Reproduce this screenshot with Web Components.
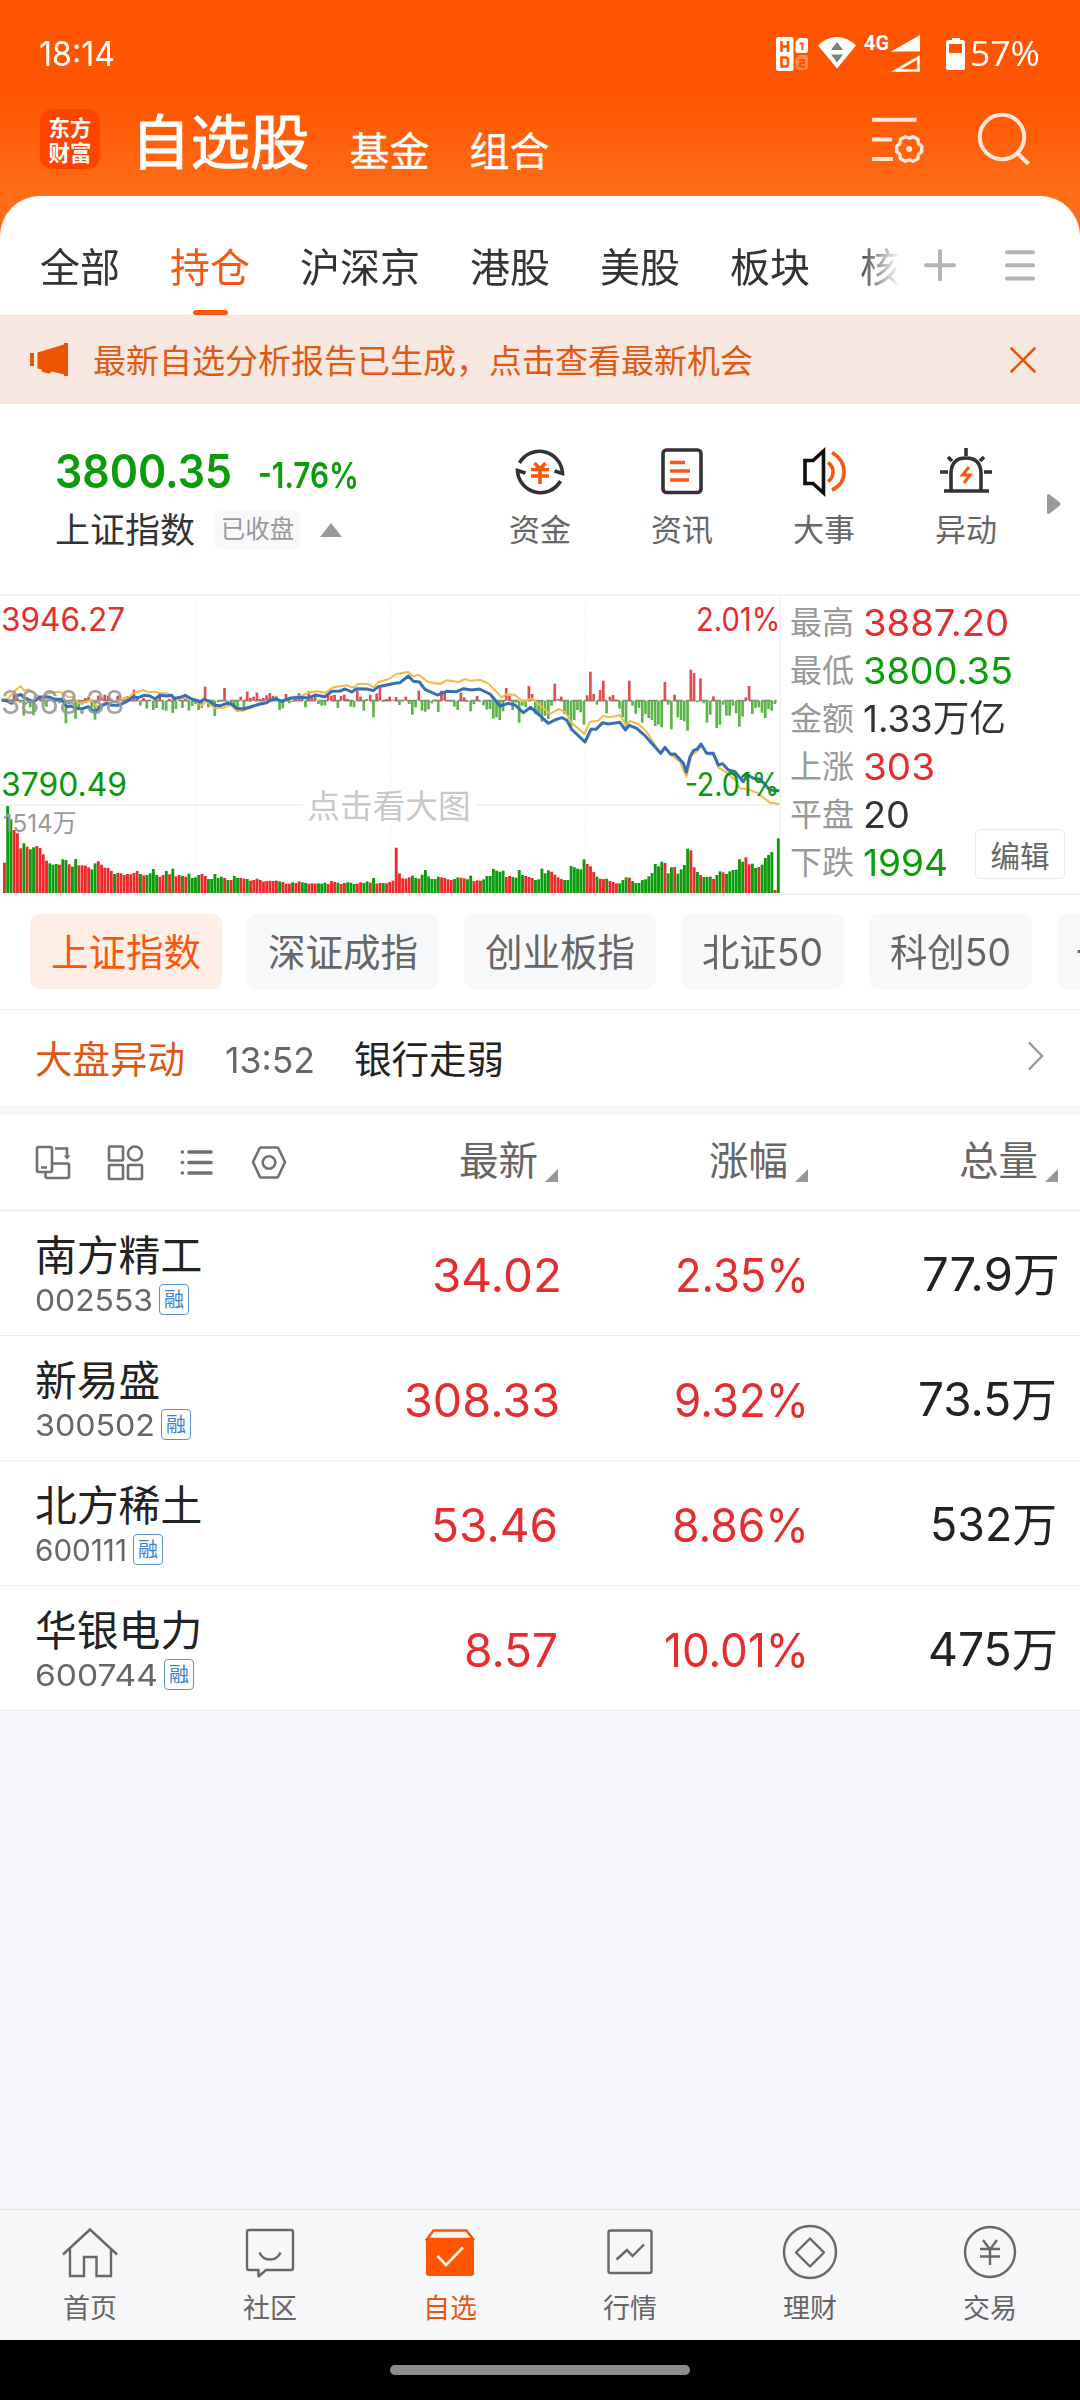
<!DOCTYPE html>
<html lang="zh-CN">
<head>
<meta charset="utf-8">
<title>自选股</title>
<style>
  body {
    margin: 0;
    background: #f6f7fa;
    font-family: Inter, "Noto Sans CJK SC", sans-serif;
    color: #333;
  }
</style>
</head>
<body>

<app-></app->

<script>
'use strict'

const define = (name, css, html, after) =>
  customElements.define(name,
    class extends HTMLElement {
      constructor() {
        super()
        const t = document.createElement('template')
        t.innerHTML = `<style>${css}</style>${html}`
        this
          .attachShadow({mode: 'open'})
          .appendChild(t.content.cloneNode(true))
      }
      connectedCallback() {
        if (after) after(this, this.shadowRoot)
      }
    }
  )


// ---------- fit- : one line of text stretched to the width in "w" ----------

define('fit-', `
  :host { display: inline-block; white-space: nowrap; flex: none; }
  span { display: inline-block; transform-origin: 0 50%; }
`, `<span><slot></slot></span>`, (host, root) => {
  const span = root.querySelector('span')
  const w = +host.getAttribute('w')
  span.style.transform = 'none'
  const real = span.getBoundingClientRect().width
  host.style.width = w + 'px'
  span.style.transform = `scaleX(${w / real})`
})


// ---------- status bar ----------

define('status-bar', `
  :host {
    display: flex; align-items: center; box-sizing: border-box;
    height: 88px; padding: 20px 40px 0 39px;
    color: #fff; font-size: 34px; line-height: 40px;
  }
  svg { margin-left: auto; }
  .pct { font-family: "Open Sans", sans-serif; margin: 0 0 2px 2px; }
  .g { font: 700 20px Roboto, sans-serif; }
`, `
  <fit- w="76">18:14</fit->
  <svg width="194" height="44" viewBox="774 32 194 44" fill="#fff">
    <rect x="776" y="37" width="17.500" height="34" rx="2.500"/>
    <g fill="none" stroke="#ff5500" stroke-width="2.600">
      <path d="M781.500 41v11M788 41v11M781.500 46.500h6.500"/>
      <path d="M781.500 57.500h4q2.500 0 2.500 2.500v4q0 2.500-2.500 2.500h-4z"/>
    </g>
    <path d="M799 38h6.500q2.500 0 2.500 2.500v10q0 2.500-2.500 2.500h-8q-2 0-2-2.500V42z"/>
    <path d="M799.500 43.500h3V50" fill="none" stroke="#ff5500" stroke-width="2"/>
    <path opacity=".3" d="M799 55h6.500q2.500 0 2.500 2.500v10q0 2.500-2.500 2.500h-8q-2 0-2-2.500V59z"/>
    <path d="M799 60h5v3h-4v3.500h5" fill="none" stroke="#ff5500" stroke-width="2"/>
    <path d="M818 45.500q8.500-8.500 19-8.500t19 8.500L837 68.500z"/>
    <path d="M837 42l6 8h-12zM837 62.500l6-8h-12z" fill="#7f7f7f"/>
    <text class="g" x="864" y="50" textLength="25" lengthAdjust="spacingAndGlyphs">4G</text>
    <path d="M920 35v16.500h-29z"/>
    <path d="M918.500 57.500v13H896z" fill="none" stroke="#fff" stroke-width="2.600"/>
    <path d="M952 38h8v3h-8z"/>
    <rect x="946" y="40" width="19" height="30" rx="2.500"/>
    <path d="M949 44h13v9h-13z" fill="#ff5500"/>
  </svg>
  <fit- class="pct" w="70">57%</fit->
`)


// ---------- title row ----------

define('title-bar', `
  :host {
    display: flex; align-items: flex-start; box-sizing: border-box;
    height: 108px; padding: 0 48px 0 40px; color: #fff;
  }
  .logo {
    width: 60px; height: 60px; margin-top: 21px; padding-top: 5px; box-sizing: border-box;
    border-radius: 13px; background: #ff4400; text-align: center;
    font: 700 21.500px/25px "Noto Sans CJK SC", sans-serif;
  }
  h1 { margin: 24px 40px 0 31px; font-size: 59.500px; line-height: 60px; font-weight: 400; -webkit-text-stroke: .9px #fff; }
  a { margin: 44px 39px 0 0; font-size: 40px; line-height: 40px; -webkit-text-stroke: .3px #fff; }
  a + a { margin-left: 1px; }
  svg { margin-top: 20px; fill: none; stroke: #ffe6d8; stroke-width: 4; }
  .set { margin-left: auto; margin-right: 46px; }
`, `
  <div class="logo">东方<br>财富</div>
  <h1>自选股</h1>
  <a>基金</a>
  <a>组合</a>
  <svg class="set" width="58" height="62" viewBox="870 108 58 62">
    <path d="M872 119.700h44.500M872 139.500h20M872 159h21"/>
    <g transform="translate(909.200 149)" stroke-width="3.400" stroke-linejoin="round">
      <path d="M12.500-2.700V2.700L9.300 5.400 8.700 9.700 4 12.200 0 10.800-4 12.200-8.700 9.700-9.300 5.400-12.500 2.700V-2.700L-9.300-5.400-8.700-9.700-4-12.200 0-10.800 4-12.200 8.700-9.700 9.300-5.400z"/>
      <circle r="3" fill="#ffe6d8" stroke="none"/>
    </g>
  </svg>
  <svg width="58" height="62" viewBox="974 108 58 62">
    <circle cx="1002" cy="137" r="22.200"/>
    <path d="M1017.500 153l11 11"/>
  </svg>
`)


// ---------- group tabs ----------

define('group-tabs', `
  :host {
    display: flex; box-sizing: border-box; height: 120px; padding: 0 43px 0 40px;
    border-radius: 40px 40px 0 0; border-bottom: 1px solid #e2e2e6; background: #fff;
  }
  nav {
    display: flex; gap: 50px; width: 860px; overflow: hidden; white-space: nowrap;
    -webkit-mask: linear-gradient(90deg, #000 815px, transparent 860px);
    mask: linear-gradient(90deg, #000 815px, transparent 860px);
  }
  a {
    display: flex; flex-direction: column; align-items: center; justify-content: space-between;
    flex: none; font-size: 40px; line-height: 40px; padding-top: 52px;
  }
  a.on { color: #f9560e; }
  a.on::after { content: ""; width: 35px; height: 5px; border-radius: 3px; background: #f9560e; }
  svg { margin: 47px 0 0 auto; flex: none; fill: none; stroke: #b3b3b3; stroke-width: 4; stroke-linecap: round; }
`, `
  <nav><a>全部</a><a class="on">持仓</a><a>沪深京</a><a>港股</a><a>美股</a><a>板块</a><a>核心</a></nav>
  <svg width="116" height="44" viewBox="921 243 116 44">
    <path d="M926 265.300h28M940 251v28.500M1007 252.300h26M1007 265.300h26M1007 278.500h26"/>
  </svg>
`)


// ---------- notice ----------

define('notice-bar', `
  :host {
    display: flex; align-items: center; box-sizing: border-box; height: 88px;
    padding: 0 43px 0 28px; background: #f6e7e0; color: #df5a12; font-size: 33px; line-height: 40px;
  }
  fit- { margin: 2px 0 0 23px; }
  .x { margin-left: auto; }
`, `
  <svg width="42" height="36" viewBox="28 342 42 36" fill="#ea5504">
    <path d="M30 353h4v13h-4zM37.500 352.500L64 344.500V343h4v33h-4v-1.500l-12-3-2.500 2-7-1.500-1-2.500-4-1z"/>
  </svg>
  <fit- w="660">最新自选分析报告已生成，点击查看最新机会</fit->
  <svg class="x" width="28" height="28" viewBox="-14 -14 28 28" fill="none" stroke="#e2590e" stroke-width="2.600" stroke-linecap="round">
    <path d="M-11.500-11.500L11.500 11.500M11.500-11.500L-11.500 11.500"/>
  </svg>
`)


// ---------- index summary and shortcuts ----------

define('short-cut', `
  :host {
    display: flex; flex-direction: column; align-items: center; width: 142px;
    font-size: 31px; line-height: 36px; color: #666; gap: 13px;
  }
`, `<slot name="icon"></slot><span><slot></slot></span>`)

define('index-head', `
  :host { display: flex; box-sizing: border-box; height: 190px; padding: 0 0 0 55px; background: #fff; }
  .quote { width: 414px; padding-top: 42px; }
  .row { display: flex; align-items: center; }
  .price { color: #0b9b0b; align-items: baseline; font-weight: 600; font-size: 46px; line-height: 50px; }
  .price fit-:last-child { font-size: 36px; margin-left: 26px; }
  .name { margin-top: 10px; font-size: 35px; line-height: 40px; }
  .tag {
    margin: 0 20px; width: 85px; height: 38px; border-radius: 5px; background: #f7f8fa;
    font-size: 24.500px; line-height: 37px; text-align: center; color: #999;
  }
  .up { border: 11px solid transparent; border-top: 0; border-bottom: 14px solid #999; }
  .cuts { display: flex; padding-top: 41px; }
  .more { margin: 90px 0 0 10px; align-self: flex-start; }
  svg { fill: none; stroke: #333; stroke-width: 3.600; }
  .o { stroke: #f9560e; }
`, `
  <div class="quote">
    <div class="row price"><fit- w="177">3800.35</fit-><fit- w="101">-1.76%</fit-></div>
    <div class="row name">上证指数<span class="tag">已收盘</span><i class="up"></i></div>
  </div>
  <div class="cuts">
    <short-cut>
      <svg slot="icon" width="54" height="54" viewBox="-27 -27 54 54">
        <path d="M-20.500-9A23 23 0 0 1 22.500 1.500l-8-2.500M20.500 9A23 23 0 0 1-22.500-1.500l8 2.500"/>
        <path class="o" d="M-5.500-9L0-3l5.500-6M0-3V12M-9-2.500H9M-9 4H9"/>
      </svg>资金
    </short-cut>
    <short-cut>
      <svg slot="icon" width="54" height="54" viewBox="-27 -27 54 54">
        <rect x="-19" y="-22" width="38" height="42.500" rx="3.500"/>
        <path class="o" d="M-12-9.500H3M-12-1H8M-12 8H7"/>
      </svg>资讯
    </short-cut>
    <short-cut>
      <svg slot="icon" width="54" height="54" viewBox="-27 -27 54 54">
        <path stroke="#111" d="M-19-11.500h8L-.500-21V21L-11 11.500h-8z"/>
        <path class="o" d="M4-9.500q5 3.500 5 9.500t-5 9.500M8-19.500q12 7 12 19.500T8 18"/>
      </svg>大事
    </short-cut>
    <short-cut>
      <svg slot="icon" width="54" height="54" viewBox="-27 -27 54 54">
        <path d="M-15 18V2Q-15-14 0-14T15 2V18M-22 19H23M0-24v8M-18-15l4 4M18-15l-4 4M-26 0h8M26 0h-8"/>
        <path class="o" stroke-width="3" d="M3-5L-3.500 3H4L-2 11"/>
      </svg>异动
    </short-cut>
  </div>
  <svg class="more" width="14" height="20" viewBox="0 0 14 20">
    <path d="M0 1.500Q0 0 2 0L13 8.500Q14 10 13 11.500L2 20Q0 20 0 18.500z" fill="#999" stroke="none"/>
  </svg>
`)


// ---------- intraday chart ----------
// units are a third of a pixel, one bar a minute, 240 bars

const volume = `
r91 g261 g221 r189 r179 r134 g149 r139 g131 g137 r141 r135 r116 r97 g89 g85 g87 r85 g101 g99
r86 g79 g102 r83 r83 r82 r77 g71 g89 r95 r85 r76 r75 r66 g57 r60 r59 r54 r57 r56
r60 r66 g57 r53 g54 g59 g72 g54 r49 r54 g66 r56 g73 r50 r54 g51 r49 g58 g45 g47
g54 r57 r51 g42 g42 g57 g45 g49 r45 g39 r39 g51 g45 r45 r43 g42 r37 r39 r43 r39
r34 r36 r37 r36 r37 g35 r33 r28 r28 g32 r30 r35 g32 g30 r28 r29 r28 g29 g28 g31
r27 r36 r33 g31 r27 r30 g32 g31 g27 r28 r32 g30 g35 r31 g45 r28 r30 g30 r29 r33
r37 r136 r59 r44 r43 r47 g52 g45 r43 g55 g69 g50 g42 g42 g49 r47 r45 r41 r39 g42
g47 r46 r44 g41 g52 r36 r38 r37 g41 g51 g51 g72 g67 g64 g67 r48 r51 g48 g46 g69
g54 r51 r48 r45 g39 g41 g73 g59 g68 r64 r55 r47 r42 g39 g39 g81 g77 g73 g71 g101
r87 r80 r63 g49 r43 r42 g43 r36 r33 r29 g29 g39 g47 r46 g36 g30 g30 g39 g41 g50
g60 g87 g80 g94 r90 g59 g77 r78 g58 g71 g84 g133 r128 r77 g63 r54 g48 g48 g49 r42
g54 g65 r62 g57 g65 g69 g70 g101 g94 r107 r86 g88 g75 r78 g85 g105 g114 g123 r9 g164
`.trim().split(/\s+/)

// advances minus declines, up is red
const breadth = `
3 5 -4 -20 -8 6 45 -10 20 44 -6 -8 -10 18 -4 -8 4 8 6 68
10 -4 54 25 12 -8 -12 20 57 -15 -10 -18 -15 -6 3 -15 -6 -10 -14 -12
-33 -6 15 -8 24 -3 28 22 -24 28 30 -6 37 25 -3 22 -5 30 16 10
28 22 -42 20 10 46 5 3 -38 8 15 18 34 -12 30 -27 -8 -12 -24 -5
-8 -16 -23 -14 -13 28 23 -20 8 4 -10 -22 -13 20 -28 -10 -14 10 15 14
-16 -15 -17 22 -14 -18 -5 18 20 -30 -12 30 -5 -18 50 -22 -40 3 -5 -12
-3 -11 13 0 -12 10 42 20 -30 30 33 26 8 -3 34 -30 -28 2 3 18
28 -24 -10 4 32 10 -14 3 14 27 25 54 50 58 32 -38 -15 28 6 66
15 20 -44 -20 40 45 63 45 55 15 -51 -5 -12 40 45 80 58 28 35 72
-16 -87 -20 12 -32 -60 38 -12 -17 -3 24 50 78 -60 15 40 22 66 40 52
58 76 72 80 -56 12 86 -18 50 58 62 90 -93 -83 5 -67 8 66 42 -13
82 72 12 45 45 15 38 78 48 -10 -44 40 22 20 36 52 25 30 10
`.trim().split(/\s+/).map(Number)

const price = `5,330 20,332 35,340 50,318 62,313 75,325 100,335 118,322 135,320 150,322 165,328 185,328 200,350 212,348
225,354 245,357 265,350 285,368 300,350 320,340 335,346 355,346 380,335 400,320 415,323 432,316 450,318 465,327 480,316
500,318 515,316 522,326 540,322 556,316 572,326 585,330 600,336 612,328 625,332 645,346 662,347 680,340 695,342 711,355
730,357 760,348 780,342 800,338 812,330 830,327 845,334 865,326 895,322 925,324 945,315 975,320 995,304 1020,303 1035,297
1055,306 1070,296 1100,297 1120,302 1135,290 1160,285 1185,280 1200,278 1225,258 1240,274 1258,276 1275,298 1312,315
1340,304 1370,305 1390,296 1415,300 1438,297 1470,312 1500,348 1525,340 1545,345 1570,368 1592,352 1615,372 1645,400
1665,390 1685,383 1700,390 1715,418 1755,456 1773,418 1788,418 1808,398 1825,402 1860,397 1876,420 1888,406 1910,415
1935,437 1982,490 1995,472 2012,493 2025,492 2050,520 2059,546 2070,500 2080,482 2092,477 2103,462 2120,490 2140,490
2155,525 2168,521 2185,540 2205,545 2230,575 2242,554 2260,565 2280,568 2310,600 2338,602`

const lead = `5,330 25,325 45,302 62,288 72,302 85,298 115,318 130,322 145,310 180,305 205,322 220,320 235,340 260,336
275,328 288,350 300,345 330,335 370,327 390,320 400,308 430,300 445,307 465,305 480,310 500,310 525,322 545,325 570,322
590,336 605,346 620,334 645,355 670,354 690,345 710,362 730,362 760,350 800,338 815,330 845,331 870,322 905,318 925,308
950,304 975,308 1000,292 1040,286 1060,293 1075,282 1105,282 1120,292 1135,276 1165,268 1190,252 1225,246 1240,260
1255,254 1285,276 1320,282 1340,271 1375,276 1395,267 1410,272 1440,270 1465,280 1505,322 1520,312 1545,315 1570,336
1595,325 1620,346 1650,372 1675,357 1695,365 1715,398 1753,432 1770,395 1795,392 1810,377 1825,382 1860,376 1878,405
1890,393 1915,402 1940,425 1982,492 1995,475 2015,496 2040,515 2059,560 2075,495 2090,485 2105,466 2120,492 2140,495
2155,532 2180,548 2205,570 2220,595 2245,598 2270,608 2310,638 2338,642`

const step = 9.714
const volumeBars = volume.map((v, i) => {
  const h = +v.slice(1)
  return `<rect class="${v[0]}" x="${(9 + i * step).toFixed(1)}" y="${909 - h}" width="8.6" height="${h}"/>`
}).join('')
const breadthBars = breadth.map((v, i) =>
  `<rect class="${v < 0 ? 'u' : 'd'}" x="${(9 + i * step).toFixed(1)}" y="${v < 0 ? 332 + v : 332}" width="8" height="${Math.abs(v)}"/>`
).join('')

define('day-chart', `
  :host { display: block; width: 781px; height: 301px; }
  svg { display: block; }
  text { font-size: 96px; }
  .r { fill: #ee2a2a; } .g { fill: #0a9c0a; }
  .u { fill: #e04e4e; } .d { fill: #5cb548; }
  .grid { fill: none; stroke: #f2f2f4; stroke-width: 6; }
  .dot { stroke: #e4e4e6; stroke-width: 3; stroke-dasharray: 3 6; }
`, `
  <svg width="781" height="301" viewBox="0 12 2343 903">
    <path class="grid" d="M0 15H2343M0 645H2343M2341 12V909"/>
    <path class="dot" d="M587 20V909M1172 20V909M1756 20V909"/>
    <rect x="908" y="590" width="520" height="110" fill="#fff"/>
    <path d="M5 332H2330" stroke="#888" stroke-width="5" stroke-dasharray="30 8"/>
    ${breadthBars}
    <g>${volumeBars}</g>
    <polyline points="${lead}" fill="none" stroke="#f5b94a" stroke-width="6" stroke-linejoin="round"/>
    <polyline points="${price}" fill="none" stroke="#356fb5" stroke-width="9" stroke-linejoin="round"/>
    <text fill="#999" opacity=".9" x="3" y="371" textLength="370" lengthAdjust="spacingAndGlyphs">3868.38</text>
    <text fill="#e52d2d" x="3" y="123" textLength="372" lengthAdjust="spacingAndGlyphs">3946.27</text>
    <text fill="#0b960b" x="3" y="618" textLength="378" lengthAdjust="spacingAndGlyphs">3790.49</text>
    <text fill="#e52d2d" x="2088" y="123" textLength="253" lengthAdjust="spacingAndGlyphs">2.01%</text>
    <text fill="#0b960b" x="2054" y="618" textLength="285" lengthAdjust="spacingAndGlyphs">-2.01%</text>
    <text fill="#999" x="8" y="725" style="font-size:74px" textLength="222" lengthAdjust="spacingAndGlyphs">1514万</text>
    <text fill="#c8c8c8" x="922" y="683" style="font-size:98px" textLength="490" lengthAdjust="spacingAndGlyphs">点击看大图</text>
  </svg>
`)

define('day-stats', `
  :host {
    display: flex; flex-direction: column; position: relative; flex: 1; box-sizing: border-box;
    padding: 3px 0 0 9px; border-top: 2px solid #f2f2f4; border-bottom: 2px solid #f2f2f4;
  }
  div { display: flex; align-items: center; height: 48px; font-size: 32px; line-height: 44px; color: #999; }
  fit- { margin-left: 9px; font-size: 37px; color: #333; }
  .u { color: #e52d2d; } .d { color: #0b9b0b; }
  button {
    position: absolute; right: 15px; bottom: 14px; width: 90px; height: 50px; padding: 0;
    border: 1px solid #e9e9ec; border-radius: 6px; background: #fff;
    font: inherit; font-size: 29.500px; color: #666;
  }
`, `
  <div>最高<fit- class="u" w="146">3887.20</fit-></div>
  <div>最低<fit- class="d" w="150">3800.35</fit-></div>
  <div>金额<fit- w="143">1.33万亿</fit-></div>
  <div>上涨<fit- class="u" w="72">303</fit-></div>
  <div>平盘<fit- w="47">20</fit-></div>
  <div>下跌<fit- class="d" w="85">1994</fit-></div>
  <button>编辑</button>
`)

define('chart-row', `
  :host { display: flex; height: 301px; background: #fff; }
`, `<day-chart></day-chart><day-stats></day-stats>`)


// ---------- index chips ----------

define('index-chips', `
  :host {
    display: flex; gap: 25px; box-sizing: border-box; height: 115px; padding: 19px 0 0 30px;
    overflow: hidden; background: #fff; border-bottom: 1px solid #ececee;
  }
  a {
    flex: none; height: 75px; padding: 0 21px; border-radius: 9px; background: #f7f8fa;
    font-size: 37.500px; line-height: 77px; color: #666; white-space: nowrap;
  }
  a.on { background: #ffeee6; color: #f9560e; }
  a:last-child { padding-left: 19px; }
`, `
  <a class="on">上证指数</a><a>深证成指</a><a>创业板指</a>
  <a><fit- w="121">北证50</fit-></a><a><fit- w="121">科创50</fit-></a><a>一</a>
`)


// ---------- market move line ----------

define('move-line', `
  :host {
    display: flex; align-items: center; box-sizing: border-box; height: 105px;
    padding: 4px 35px 0; background: #fff; border-bottom: 10px solid #f6f7fa;
    font-size: 37.500px; line-height: 40px;
  }
  b { font-weight: 400; color: #dc5914; }
  fit- { margin: 0 39px 0 40px; font-size: 36px; color: #666; }
  span { color: #222; }
  svg { margin: 0 0 8px auto; }
`, `
  <b>大盘异动</b><fit- w="90">13:52</fit-><span>银行走弱</span>
  <svg width="18" height="30" viewBox="0 0 18 30" fill="none" stroke="#999" stroke-width="2.400"><path d="M2 1.500l13 13.500L2 28.500"/></svg>
`)


// ---------- stock table ----------

define('table-head', `
  :host {
    display: grid; grid-template-columns: 308px 250px 250px 250px; align-items: center;
    box-sizing: border-box; height: 96px; padding-bottom: 2px;
    background: #fff; border-bottom: 1px solid #e9e9ec; font-size: 39.500px; color: #666;
  }
  .tools { display: flex; gap: 32px; padding-left: 33px; }
  .tools svg { fill: none; stroke: #707070; stroke-width: 2.600; flex: none; }
  .th { display: flex; justify-content: flex-end; align-items: center; line-height: 58px; padding-bottom: 2px; }
  .th svg { margin: 30px 0 0 7px; }
`, `
  <div class="tools">
    <svg width="40" height="40" viewBox="-20 -20 40 40">
      <rect x="-16" y="-15" width="15" height="25" rx="2"/>
      <path d="M-12 5.500h6M2-13.500h12V-4M-7.500 11v3q0 2 2 2H14q2 0 2-2V3.500q0-2-2-2H0"/>
      <path d="M10.500-6.500h7L14-2.500z" fill="#707070" stroke="none"/>
    </svg>
    <svg width="40" height="40" viewBox="-20 -20 40 40">
      <rect x="-16" y="-15.500" width="14" height="14" rx="1"/><circle cx="10" cy="-8.500" r="7"/>
      <rect x="-16" y="3" width="14" height="14" rx="1"/><rect x="3" y="3" width="14" height="14" rx="1"/>
    </svg>
    <svg width="40" height="40" viewBox="-20 -20 40 40" stroke-linecap="round">
      <path stroke-width="3.600" d="M-8-10H14M-8 .500H14M-8 11H14M-14.700-10h.1M-14.700.500h.1M-14.700 11h.1"/>
    </svg>
    <svg width="40" height="40" viewBox="-20 -20 40 40">
      <path stroke-linejoin="round" d="M-8-14.500H8Q9-14.500 9.500-13.500L16 0 9.500 14Q9 15.500 8 15.500H-8Q-9 15.500-9.500 14L-16 0-9.500-13.500Q-9-14.500-8-14.500z"/>
      <circle cy=".5" r="6.300"/>
    </svg>
  </div>
  <div class="th">最新<svg width="13" height="13"><path d="M13 0v13H0z" fill="#97979b"/></svg></div>
  <div class="th">涨幅<svg width="13" height="13"><path d="M13 0v13H0z" fill="#97979b"/></svg></div>
  <div class="th">总量<svg width="13" height="13"><path d="M13 0v13H0z" fill="#97979b"/></svg></div>
`)

define('stock-row', `
  :host {
    display: grid; grid-template-columns: 308px 250px 251px 248px; align-items: center;
    box-sizing: border-box; height: 125px; background: #fff; border-bottom: 1px solid #ececee;
    font-size: 46px; color: #e52d2d;
  }
  .who { padding: 3px 0 0 35px; }
  .name { font-size: 41.800px; line-height: 50px; color: #222; white-space: nowrap; }
  .code { display: flex; align-items: center; height: 38px; font-size: 30px; color: #666; }
  .code i {
    box-sizing: border-box; width: 30px; height: 31px; margin-left: 6px;
    border: 1.500px solid #5b93d0; border-radius: 4px;
    font: 400 20px/28px "Noto Sans CJK SC", sans-serif; text-align: center; color: #3b80cc;
  }
  .num { text-align: right; line-height: 60px; margin-top: 3px; }
  .num:last-child { color: #222; margin-top: 1px; }
`, `<div class="who"><div class="name"></div><div class="code"></div></div><div class="num"></div><div class="num"></div><div class="num"></div>`,
(host, root) => {
  const [name, ...cells] = host.getAttribute('data').split(' ')
  const fit = c => { const [t, w] = c.split('|'); return `<fit- w="${w}">${t}</fit->` }
  root.querySelector('.name').textContent = name
  root.querySelector('.code').innerHTML = fit(cells[0]) + '<i>融</i>'
  root.querySelectorAll('.num').forEach((n, i) => n.innerHTML = fit(cells[i + 1]))
})


// ---------- bottom navigation ----------

define('nav-item', `
  :host {
    display: flex; flex-direction: column; align-items: center; flex: 1; gap: 10px; padding-top: 12px;
    font-size: 27px; line-height: 34px; color: #666; --line: #686868;
  }
  :host([on]) { color: #e2590e; --line: #ff5500; }
  ::slotted(svg) { fill: none; stroke: var(--line); stroke-width: 2.400; }
`, `<slot name="icon"></slot><span><slot></slot></span>`)

define('bottom-nav', `
  :host { display: flex; box-sizing: border-box; height: 131px; background: #f7f7fa; border-top: 1px solid #dfe1e5; }
`, `
  <nav-item>
    <svg slot="icon" width="60" height="60" viewBox="0 0 60 60"><path d="M3 32.500L30 7.500l27 25M10 27v27h14V35h12.500v19H51V27"/></svg>首页
  </nav-item>
  <nav-item>
    <svg slot="icon" width="60" height="60" viewBox="0 0 60 60"><path stroke-linejoin="round" d="M9 8H51q2 0 2 2V46q0 2-2 2H26l-7.500 6.500V48H9q-2 0-2-2V10q0-2 2-2zM19.500 30.500q3 7 10.500 7t10.500-7"/></svg>社区
  </nav-item>
  <nav-item on>
    <svg slot="icon" width="60" height="60" viewBox="0 0 60 60">
      <path fill="#ff5500" stroke="none" d="M6 17H54V51q0 3-3 3H9q-3 0-3-3z"/>
      <path fill="#fff4ec" d="M7 17L13.500 8.500h33L53 17z"/>
      <path style="stroke:#fff4ec" stroke-width="2.600" d="M17.500 34L26 43 43 25.500"/>
    </svg>自选
  </nav-item>
  <nav-item>
    <svg slot="icon" width="60" height="60" viewBox="0 0 60 60"><rect x="8.500" y="8.500" width="43" height="42.500" rx="2"/><path d="M16.500 37.500L27 28l5.500 6L44 22.500"/></svg>行情
  </nav-item>
  <nav-item>
    <svg slot="icon" width="60" height="60" viewBox="0 0 60 60"><circle cx="30" cy="30" r="26"/><path stroke-linejoin="round" d="M30 16.500L44 30.500 30 44.500 16 30.500z"/></svg>理财
  </nav-item>
  <nav-item>
    <svg slot="icon" width="60" height="60" viewBox="0 0 60 60"><circle cx="30" cy="30" r="25"/><path d="M23 18l7 9.500 7-9.500M30 27.500V43M20 27H40M20 34.500H40"/></svg>交易
  </nav-item>
`)

define('home-handle', `
  :host { display: flex; align-items: center; justify-content: center; height: 60px; background: #000; }
  i { width: 300px; height: 10px; border-radius: 5px; background: #8c8c8c; }
`, `<i></i>`)


// ---------- the page ----------

define('app-', `
  :host {
    display: flex; flex-direction: column; width: 1080px; height: 2400px; overflow: hidden;
    background: linear-gradient(#ff5500 95px, #ff6d18 196px) 0 0 / 100% 240px no-repeat;
  }
  :host > * { flex: none; }
  .rest { flex: 1; background: #f6f7fa; }
`, `
  <status-bar></status-bar>
  <title-bar></title-bar>
  <group-tabs></group-tabs>
  <notice-bar></notice-bar>
  <index-head></index-head>
  <chart-row></chart-row>
  <index-chips></index-chips>
  <move-line></move-line>
  <table-head></table-head>
  <stock-row data="南方精工 002553|118 34.02|130 2.35%|134 77.9万|138"></stock-row>
  <stock-row data="新易盛 300502|120 308.33|156 9.32%|135 73.5万|139"></stock-row>
  <stock-row data="北方稀土 600111|92 53.46|127 8.86%|137 532万|127"></stock-row>
  <stock-row data="华银电力 600744|123 8.57|94 10.01%|145 475万|130"></stock-row>
  <div class="rest"></div>
  <bottom-nav></bottom-nav>
  <home-handle></home-handle>
`)
</script>
</body>
</html>
